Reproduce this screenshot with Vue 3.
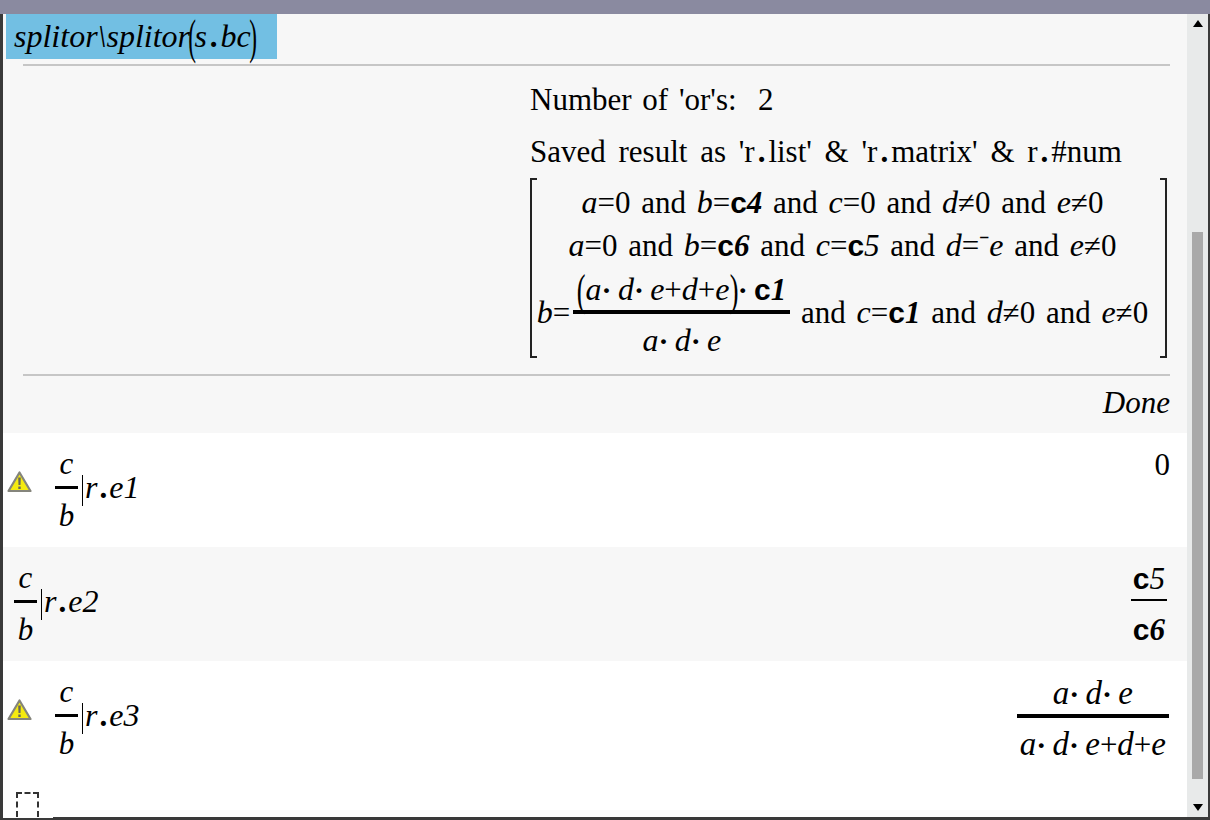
<script setup>
</script>

<template>
  <div class="window">
    <div class="topbar"></div>
    <div class="body">
      <div class="history">
        <section class="entry shaded first">
          <div class="input-line">
            <span class="selected"><i>splitor\splitor</i><span class="tall">(</span><i>s</i><b class="dot">.</b><i>bc</i><span class="tall">)</span></span>
          </div>
          <hr class="rule top-rule" />
          <div class="printed">
            <p class="line one">Number of 'or's:&nbsp; 2</p>
            <p class="line two">Saved result as 'r<b>.</b>list' &amp; 'r<b>.</b>matrix' &amp; r<b>.</b>#num</p>
            <div class="matrix">
              <div class="row"><i>a</i>=0 and <i>b</i>=<span class="k">c</span><b class="n">4</b> and <i>c</i>=0 and <i>d</i>≠0 and <i>e</i>≠0</div>
              <div class="row"><i>a</i>=0 and <i>b</i>=<span class="k">c</span><b class="n">6</b> and <i>c</i>=<span class="k">c</span><span class="n thin">5</span> and <i>d</i>=⁻<i>e</i> and <i>e</i>≠0</div>
              <div class="row frac-row">
                <i>b</i>=<span class="frac wide">
                  <span class="num"><span class="tall small">(</span><i>a</i><b class="cd">·</b> <i>d</i><b class="cd">·</b> <i>e</i>+<i>d</i>+<i>e</i><span class="tall small">)</span><b class="cd">·</b> <span class="k">c</span><b class="n">1</b></span>
                  <span class="den"><i>a</i><b class="cd">·</b> <i>d</i><b class="cd">·</b> <i>e</i></span>
                </span>&nbsp;and <i>c</i>=<span class="k">c</span><b class="n">1</b> and <i>d</i>≠0 and <i>e</i>≠0
              </div>
            </div>
          </div>
          <hr class="rule bottom-rule" />
          <div class="result done"><i>Done</i></div>
        </section>

        <section class="entry calc">
          <svg class="warn" viewBox="0 0 25 22" width="25" height="22">
            <path d="M12.5 1.5 L23.5 20 H1.5 Z" fill="#f5ea10" stroke="#85857c" stroke-width="2.2" stroke-linejoin="round" />
            <path d="M11.2 6.5 H13.8 L13.5 14 H11.5 Z M11.3 15.4 H13.7 V18 H11.3 Z" fill="#66665c" />
          </svg>
          <div class="expr">
            <span class="frac small-frac"><span class="num"><i>c</i></span><span class="den"><i>b</i></span></span><span class="bar"></span><span class="tail"><i>r</i><b class="dot-sm">.</b><i>e1</i></span>
          </div>
          <div class="result value zero">0</div>
        </section>

        <section class="entry calc shaded">
          <div class="expr no-icon">
            <span class="frac small-frac"><span class="num"><i>c</i></span><span class="den"><i>b</i></span></span><span class="bar"></span><span class="tail"><i>r</i><b class="dot-sm">.</b><i>e2</i></span>
          </div>
          <div class="result value">
            <span class="frac c-frac">
              <span class="num"><span class="k">c</span><span class="n thin">5</span></span>
              <span class="den"><span class="k">c</span><b class="n">6</b></span>
            </span>
          </div>
        </section>

        <section class="entry calc">
          <svg class="warn" viewBox="0 0 25 22" width="25" height="22">
            <path d="M12.5 1.5 L23.5 20 H1.5 Z" fill="#f5ea10" stroke="#85857c" stroke-width="2.2" stroke-linejoin="round" />
            <path d="M11.2 6.5 H13.8 L13.5 14 H11.5 Z M11.3 15.4 H13.7 V18 H11.3 Z" fill="#66665c" />
          </svg>
          <div class="expr">
            <span class="frac small-frac"><span class="num"><i>c</i></span><span class="den"><i>b</i></span></span><span class="bar"></span><span class="tail"><i>r</i><b class="dot-sm">.</b><i>e3</i></span>
          </div>
          <div class="result value">
            <span class="frac">
              <span class="num"><i>a</i><b class="cd">·</b> <i>d</i><b class="cd">·</b> <i>e</i></span>
              <span class="den"><i>a</i><b class="cd">·</b> <i>d</i><b class="cd">·</b> <i>e</i>+<i>d</i>+<i>e</i></span>
            </span>
          </div>
        </section>

        <div class="entry-line"><span class="placeholder"></span></div>
      </div>

      <div class="scrollbar">
        <span class="arrow up-arrow"></span>
        <div class="track"><div class="thumb"></div></div>
        <span class="arrow down-arrow"></span>
      </div>
    </div>
  </div>
</template>

<style>
html, body { margin: 0; background: #fff; overflow: hidden; }
</style>

<style scoped>
.window {
  width: 1210px;
  height: 820px;
  display: flex;
  flex-direction: column;
  font-family: "Liberation Serif", "Times New Roman", serif;
  font-size: 31px;
  color: #000;
  background: #fff;
}
.topbar {
  height: 14px;
  flex: none;
  background: #8a8aa0;
}
.body {
  flex: 1;
  min-height: 0;
  display: flex;
  border-left: 3px solid #3a3a3a;
  border-right: 2px solid #3a3a3a;
  border-bottom: 3px solid #3a3a3a;
}
.history {
  flex: 1;
  min-width: 0;
  display: flex;
  flex-direction: column;
}
.entry { box-sizing: border-box; flex: none; }
.shaded { background: #f7f7f7; }
.first { height: 419px; }
.input-line { height: 45px; padding-left: 3px; line-height: 44px; }
.selected {
  display: inline-block;
  height: 45px;
  width: 271px;
  padding-left: 8px;
  box-sizing: border-box;
  background: #72bfe3;
  white-space: nowrap;
}
.selected i { font-size: 32px; }
.selected .tall { transform: scale(0.75, 1.6); margin: 0 -3px; }
.rule {
  height: 2px;
  border: 0;
  margin: 0 17px 0 20px;
  background: #c6c6c6;
}
.top-rule { margin-top: 5px; }
.bottom-rule { margin-top: 16px; }
.printed {
  padding-left: 527px;
  padding-right: 20px;
}
.line {
  margin: 0;
  white-space: nowrap;
  word-spacing: 3px;
  line-height: 52px;
}
.line.one { margin-top: 8px; }
.line.two { word-spacing: 5px; }
.line.two b { margin: 0 3px; }
.matrix {
  height: 180px;
  box-sizing: border-box;
  padding: 3px 12px 0 0;
  text-align: center;
  white-space: nowrap;
  line-height: 43px;
  background:
    linear-gradient(#222, #222) left top / 2px 100% no-repeat,
    linear-gradient(#222, #222) left top / 7px 2px no-repeat,
    linear-gradient(#222, #222) left bottom / 7px 2px no-repeat,
    linear-gradient(#222, #222) right top / 2px 100% no-repeat,
    linear-gradient(#222, #222) right top / 7px 2px no-repeat,
    linear-gradient(#222, #222) right bottom / 7px 2px no-repeat;
}
.row { word-spacing: 3px; }
.row i { font-size: 32px; }
.frac-row {
  height: 92px;
  margin-top: -4px;
}
.frac {
  display: inline-flex;
  flex-direction: column;
  align-items: center;
  vertical-align: middle;
  word-spacing: -1.5px;
}
.frac.wide { margin-left: 3px; vertical-align: 23px; }
.frac .num, .frac .den {
  display: block;
  text-align: center;
  white-space: nowrap;
}
.frac .num {
  align-self: stretch;
  line-height: 40px;
  padding: 6px 3px 0;
  border-bottom: 4px solid #000;
}
.frac.wide .num { padding: 6px 4px 0; }
.frac .den { line-height: 44px; padding: 4px 3px 0; }
.tall {
  display: inline-block;
  transform: scaleY(1.6);
  margin: 0 -1px;
  font-weight: normal;
  line-height: 1;
}
.tall.small { transform: scale(0.85, 1.45); }
.cd { font-size: 30px; }
.k {
  font-family: "Liberation Sans", Arial, sans-serif;
  font-weight: bold;
  font-size: 30px;
}
.n { font-style: italic; font-weight: bold; }
.n.thin { font-weight: normal; }
.dot { margin: 0 3px; }
.dot-sm { margin: 0 2px; }
.done {
  text-align: right;
  padding-top: 1px;
  padding-right: 17px;
  line-height: 52px;
}
.calc {
  height: 114px;
  display: flex;
  align-items: flex-start;
}
.warn {
  flex: none;
  margin: 38px 0 0 4px;
}
.expr {
  display: flex;
  align-items: flex-start;
  margin: 11px 0 0 23px;
}
.expr.no-icon { margin-left: 11px; }
.small-frac { min-width: 23px; word-spacing: 0; }
.frac.small-frac .num { line-height: 40px; padding: 0 0 2px; border-bottom-width: 3px; }
.frac.small-frac .den { line-height: 54px; padding: 0; }
.bar {
  width: 1px;
  height: 31px;
  margin: 31px 2px 0 4px;
  background: #000;
}
.tail { margin-top: 26px; line-height: 34px; }
.tail i { font-size: 32px; }
.value {
  margin-left: auto;
  padding-right: 18px;
  padding-top: 6px;
}
.value i { font-size: 33px; }
.zero { line-height: 52px; padding-right: 17px; }
.frac.c-frac { margin-right: 2px; }
.frac.c-frac .num { border-bottom-width: 2px; padding: 6px 2px 0; }
.frac.c-frac .den { padding: 7px 0 0; }
.entry-line { flex: 1; position: relative; }
.entry-line::after {
  content: "";
  position: absolute;
  left: 0;
  bottom: -1px;
  width: 50px;
  height: 1px;
  background: #fff;
}
.placeholder {
  display: block;
  width: 19px;
  height: 23px;
  margin: 17px 0 0 13px;
  border: 2px dashed #333;
  border-bottom: 0;
}
.scrollbar {
  width: 21px;
  flex: none;
  display: flex;
  flex-direction: column;
  align-items: center;
  background: #e8eaea;
}
.arrow {
  width: 0;
  height: 0;
  flex: none;
  border-left: 5px solid transparent;
  border-right: 5px solid transparent;
}
.up-arrow { border-bottom: 7px solid #000; margin-top: 6px; }
.down-arrow { border-top: 7px solid #000; margin-bottom: 6px; }
.track {
  flex: 1;
  width: 11px;
  display: flex;
  flex-direction: column;
  justify-content: flex-end;
  padding-bottom: 25px;
}
.thumb { height: 547px; background: #a9a9a9; }
</style>
